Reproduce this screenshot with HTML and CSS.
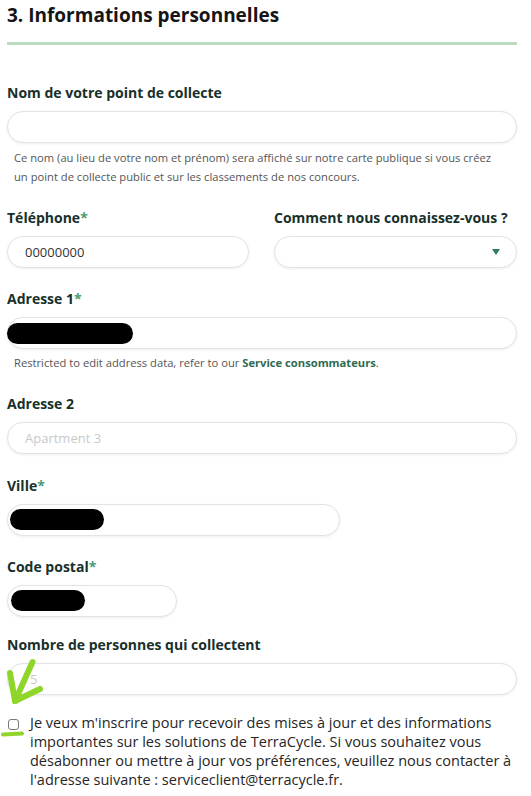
FILE: index.html
```html
<!DOCTYPE html>
<html lang="fr">
<head>
<meta charset="utf-8">
<title>Informations personnelles</title>
<link rel="stylesheet" href="styles.css">
</head>
<body>
<main class="form">
  <h2 class="title">3. Informations personnelles</h2>
  <hr class="divider">

  <div class="field first">
    <label class="label">Nom de votre point de collecte</label>
    <div class="input"></div>
    <p class="help">Ce nom (au lieu de votre nom et prénom) sera affiché sur notre carte publique si vous créez<br>un point de collecte public et sur les classements de nos concours.</p>
  </div>

  <div class="row">
    <div class="field">
      <label class="label">Téléphone<span class="req">*</span></label>
      <div class="input"><span class="value">00000000</span></div>
    </div>
    <div class="field">
      <label class="label">Comment nous connaissez-vous ?</label>
      <div class="input select"><span class="caret"></span></div>
    </div>
  </div>

  <div class="field addr1">
    <label class="label">Adresse 1<span class="req">*</span></label>
    <div class="input"><span class="redact r-addr"></span></div>
    <p class="help tight">Restricted to edit address data, refer to our <a class="link" href="#">Service consommateurs</a>.</p>
  </div>

  <div class="field addr2">
    <label class="label">Adresse 2</label>
    <div class="input"><span class="placeholder">Apartment 3</span></div>
  </div>

  <div class="field city">
    <label class="label">Ville<span class="req">*</span></label>
    <div class="input w-city"><span class="redact r-city"></span></div>
  </div>

  <div class="field zip">
    <label class="label">Code postal<span class="req">*</span></label>
    <div class="input w-zip"><span class="redact r-zip"></span></div>
  </div>

  <div class="field people">
    <label class="label">Nombre de personnes qui collectent</label>
    <div class="input"><span class="placeholder ph-num">5</span></div>
  </div>

  <div class="consent">
    <span class="checkbox"></span>
    <p class="consent-text">Je veux m'inscrire pour recevoir des mises à jour et des informations<br>importantes sur les solutions de TerraCycle. Si vous souhaitez vous<br>désabonner ou mettre à jour vos préférences, veuillez nous contacter à<br>l'adresse suivante : serviceclient@terracycle.fr.</p>
  </div>

  <svg class="scribble" width="48" height="90" viewBox="0 650 48 90" aria-hidden="true">
    <path d="M32.5 662 L15 701" />
    <path d="M10 673 L15 701" />
    <path d="M15 701 L40 689" />
    <path d="M3 734.5 L22 733.5" class="under" />
  </svg>
</main>
</body>
</html>
```

FILE: styles.css
```css
* { box-sizing: border-box; }

body {
  margin: 0;
  background: #ffffff;
  font-family: "Open Sans", "DejaVu Sans", sans-serif;
  color: #1a2e28;
}

.form {
  position: relative;
  padding: 3px 14px 30px 7px;
}

.title {
  margin: 0;
  font-size: 19px;
  line-height: 24px;
  font-weight: 700;
  color: #151515;
}

.divider {
  margin: 15px 0 0;
  border: 0;
  height: 3px;
  background: #bcdcbf;
}

.field { margin-top: 21px; }
.field.first { margin-top: 38px; }
.field.city { margin-top: 22px; }
.field.zip { margin-top: 21px; }
.field.people { margin-top: 18px; }

.label {
  display: block;
  font-size: 14px;
  line-height: 20px;
  font-weight: 700;
  color: #17302a;
  margin-bottom: 8px;
  white-space: nowrap;
}

.req { color: #4b9a78; }

.input {
  display: flex;
  align-items: center;
  height: 32px;
  border: 1px solid #e3e3e3;
  border-radius: 16px;
  background: #fff;
  box-shadow: 0 1px 3px rgba(0, 0, 0, 0.07);
  font-size: 13px;
}

.value {
  padding-left: 17px;
  color: #333;
}

.placeholder {
  padding-left: 17px;
  color: #c9c9c9;
}

.ph-num { padding-left: 22px; }

.select {
  justify-content: flex-end;
  padding-right: 16px;
}

.caret {
  width: 0;
  height: 0;
  border-left: 4.5px solid transparent;
  border-right: 4.5px solid transparent;
  border-top: 6px solid #2c7a59;
}

.w-city { width: 333px; }
.w-zip { width: 170px; }

.redact {
  display: block;
  height: 21px;
  background: #000;
  border-radius: 11px;
}
.r-addr { width: 126px; margin-left: -1px; }
.r-city { width: 94px; margin-left: 1.5px; }
.r-zip { width: 74px; margin-left: 3px; }

.help {
  margin: 6px 0 0;
  padding-left: 7px;
  font-size: 11.2px;
  line-height: 18.5px;
  color: #555;
}

.help.tight { margin-top: 5px; }

.link {
  color: #2e6b52;
  font-weight: 700;
  text-decoration: none;
}

.row {
  display: grid;
  grid-template-columns: 242px 243px;
  column-gap: 25px;
  margin-top: 22px;
}
.row .field { margin-top: 0; }

.consent {
  display: flex;
  align-items: flex-start;
  gap: 11px;
  margin-top: 18px;
}

.checkbox {
  flex: none;
  width: 11px;
  height: 11px;
  margin-top: 6px;
  margin-left: 1px;
  border: 1px solid #7a7a7a;
  border-radius: 3px;
}

.consent-text {
  margin: 0;
  font-size: 14.5px;
  line-height: 19.3px;
  color: #262626;
}

.scribble {
  position: absolute;
  left: 0;
  top: 650px;
  fill: none;
  stroke: #8fd52a;
  stroke-width: 6;
  stroke-linecap: round;
  stroke-linejoin: round;
}

.scribble .under { stroke-width: 4; }
```
